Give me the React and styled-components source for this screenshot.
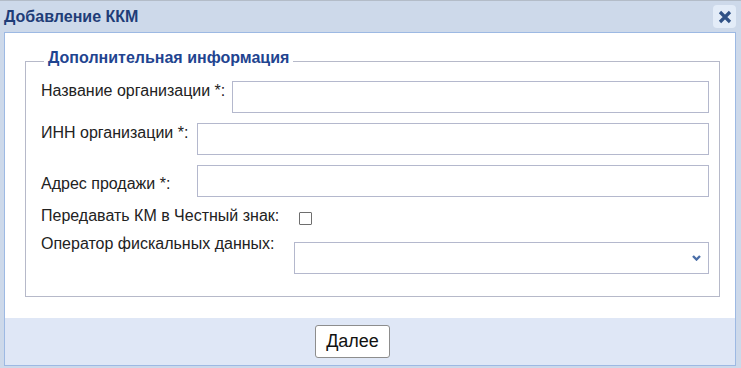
import React, { useState } from "react"
import styled, { createGlobalStyle } from "styled-components"

const GlobalStyle = createGlobalStyle`
  html, body {
    margin: 0;
    padding: 0;
    background: #ffffff;
  }
  body {
    font-family: "Liberation Sans", Arial, sans-serif;
  }
`

const Dialog = styled.div`
  width: 741px;
  height: 368px;
  box-sizing: border-box;
  display: flex;
  flex-direction: column;
  background-color: #cdd9ea;
  border-top: 1px solid #b3bcc8;
  padding: 0 5px 2px 4px;
`

const TitleBar = styled.div`
  height: 31px;
  display: flex;
  align-items: center;
  justify-content: space-between;
  flex-shrink: 0;
`

const Title = styled.span`
  font-size: 16px;
  font-weight: bold;
  color: #1f3d78;
  line-height: 18px;
`

const CloseButton = styled.button`
  width: 23px;
  height: 23px;
  margin: 0;
  padding: 0;
  border: none;
  border-radius: 4px;
  background-color: #e3ecf8;
  display: flex;
  align-items: center;
  justify-content: center;
  cursor: pointer;
`

const Panel = styled.div`
  flex: 1;
  display: flex;
  flex-direction: column;
  background-color: #ffffff;
  border: 1px solid #9db9e3;
`

const Body = styled.div`
  flex: 1;
  padding: 16px 15px 0 20px;
`

const Fieldset = styled.fieldset`
  margin: 0;
  border: 1px solid #b6b9c9;
  padding: 7px 10px 22px 15px;
  min-width: 0;
`

const Legend = styled.legend`
  margin-left: 3px;
  padding: 0 4px 8px;
  font-size: 16px;
  line-height: 17px;
  font-weight: bold;
  color: #1f4490;
`

const Rows = styled.div`
  display: flex;
  flex-direction: column;
`

const Row = styled.div`
  display: flex;
  align-items: flex-start;
  margin-top: ${props => props.$gap || 0}px;
`

const Label = styled.label`
  flex-shrink: 0;
  width: ${props => props.$width}px;
  margin-top: ${props => props.$top || 0}px;
  font-size: 16px;
  line-height: 18px;
  color: #222222;
`

const TextInput = styled.input`
  flex: 1;
  height: 32px;
  box-sizing: border-box;
  margin: 0;
  padding: 0 6px;
  border: 1px solid #b4b8cd;
  border-radius: 0;
  font-family: inherit;
  font-size: 16px;
  outline: none;
`

const Checkbox = styled.span`
  width: 13px;
  height: 13px;
  box-sizing: border-box;
  margin-top: ${props => props.$top || 0}px;
  border: 1px solid #6e6e6e;
  border-radius: 1px;
  background-color: ${props => (props.$checked ? "#dfe8f7" : "#ffffff")};
  cursor: pointer;
`

const SelectBox = styled.div`
  flex: 1;
  height: 32px;
  box-sizing: border-box;
  margin-top: ${props => props.$top || 0}px;
  border: 1px solid #b4b8cd;
  display: flex;
  align-items: center;
  justify-content: flex-end;
  padding-right: 7px;
`

const Footer = styled.div`
  height: 47px;
  flex-shrink: 0;
  background-color: #dfe7f6;
  display: flex;
  align-items: center;
  padding-left: 310px;
`

const Button = styled.button`
  width: 75px;
  height: 33px;
  margin: 0;
  padding: 0;
  box-sizing: border-box;
  border: 1px solid #8d8d8d;
  border-radius: 3px;
  background-color: #ffffff;
  font-family: inherit;
  font-size: 18px;
  color: #111111;
  cursor: pointer;
`

const CloseIcon = () => (
  <svg width="14" height="14" viewBox="0 0 14 14">
    <path d="M2 2 L12 12 M12 2 L2 12" stroke="#2f5186" strokeWidth="3.2" strokeLinecap="butt" />
  </svg>
)

const Chevron = () => (
  <svg width="9" height="6" viewBox="0 0 9 6">
    <path d="M1 1 L4.5 4.5 L8 1" fill="none" stroke="#4a6ea8" strokeWidth="2.4" />
  </svg>
)

export default function App() {
  const [checked, setChecked] = useState(false)
  return (
    <>
      <GlobalStyle />
      <Dialog>
        <TitleBar>
          <Title>Добавление ККМ</Title>
          <CloseButton aria-label="Закрыть">
            <CloseIcon />
          </CloseButton>
        </TitleBar>
        <Panel>
          <Body>
            <Fieldset>
              <Legend>Дополнительная информация</Legend>
              <Rows>
                <Row>
                  <Label $width={191} $top={1}>Название организации *:</Label>
                  <TextInput />
                </Row>
                <Row $gap={10}>
                  <Label $width={156} $top={1}>ИНН организации *:</Label>
                  <TextInput />
                </Row>
                <Row $gap={10}>
                  <Label $width={156} $top={10}>Адрес продажи *:</Label>
                  <TextInput />
                </Row>
                <Row $gap={10}>
                  <Label $width={258}>Передавать КМ в Честный знак:</Label>
                  <Checkbox
                    $top={5}
                    $checked={checked}
                    onClick={() => setChecked(!checked)}
                  />
                </Row>
                <Row $gap={10}>
                  <Label $width={253}>Оператор фискальных данных:</Label>
                  <SelectBox $top={7}>
                    <Chevron />
                  </SelectBox>
                </Row>
              </Rows>
            </Fieldset>
          </Body>
          <Footer>
            <Button>Далее</Button>
          </Footer>
        </Panel>
      </Dialog>
    </>
  )
}
